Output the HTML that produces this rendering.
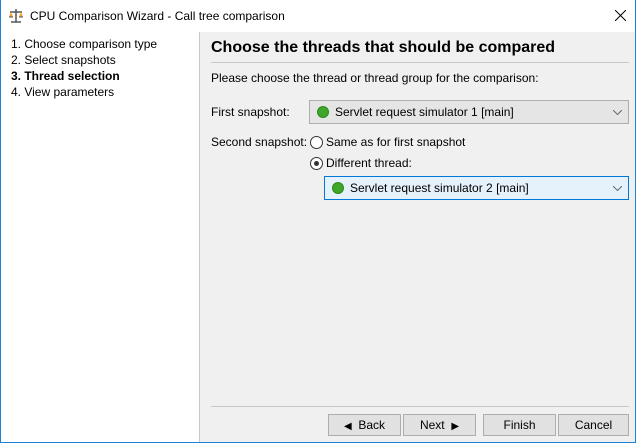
<!DOCTYPE html>
<html><head><style>
*{margin:0;padding:0;box-sizing:border-box}
body{width:636px;height:443px;overflow:hidden;font-family:"Liberation Sans",sans-serif;font-size:12px;color:#000;background:#f0f0f0;position:relative}
.win{position:absolute;left:0;top:0;width:636px;height:443px;border:1px solid #1883d7;border-top:none}
.title{position:absolute;left:0;top:0;width:636px;height:32px;background:#fff}
.title .t{position:absolute;left:30px;top:9px;font-size:12px}
.left{position:absolute;left:1px;top:32px;width:199px;height:410px;background:#fff;border-right:1px solid #c9c9c9}
.left div{position:absolute;left:10px;font-size:12px}
.abs{position:absolute}
.combo{position:absolute;height:24px;border:1px solid #adadad;background:#e5e5e5}
.combo .dot{position:absolute;left:7px;top:5px;width:12px;height:12px;border-radius:50%;background:#3fa62a;border:1px solid #2d8a1c}
.combo .lbl{position:absolute;left:25px;top:4px}
.combo svg{position:absolute;right:6px;top:9px}
.radio{position:absolute;width:13px;height:13px;border:1px solid #333;border-radius:50%;background:#fff}
.btn{position:absolute;top:414px;height:22px;border:1px solid #adadad;background:#e1e1e1;text-align:center;line-height:20px}
</style></head><body>
<div class="title">
<svg class="abs" style="left:8px;top:8px" width="16" height="16" viewBox="0 0 16 16"><path d="M8 1v13M3 14h10M2 4h12" stroke="#555" stroke-width="1.5" fill="none"/><path d="M1 9l2-5 2 5zM11 9l2-5 2 5z" fill="#f0a020"/><path d="M1 9h4M11 9h4" stroke="#555"/></svg>
<div class="t">CPU Comparison Wizard - Call tree comparison</div>
<svg class="abs" style="left:615px;top:10px" width="11" height="11"><path d="M0 0L11 11M11 0L0 11" stroke="#000" stroke-width="1"/></svg>
</div>
<div class="left">
<div style="top:5px">1. Choose comparison type</div>
<div style="top:21px">2. Select snapshots</div>
<div style="top:37px;font-weight:bold">3. Thread selection</div>
<div style="top:53px">4. View parameters</div>
</div>
<div class="abs" style="left:211px;top:39px;font-size:16px;font-weight:bold">Choose the threads that should be compared</div>
<div class="abs" style="left:211px;top:62px;width:418px;height:1px;background:#c8c8c8"></div>
<div class="abs" style="left:211px;top:71px">Please choose the thread or thread group for the comparison:</div>
<div class="abs" style="left:211px;top:105px">First snapshot:</div>
<div class="combo" style="left:309px;top:100px;width:320px"><div class="dot"></div><div class="lbl">Servlet request simulator 1 [main]</div><svg width="9" height="5"><path d="M0 0l4.5 4.5L9 0" stroke="#666" fill="none"/></svg></div>
<div class="abs" style="left:211px;top:135px">Second snapshot:</div>
<div class="radio" style="left:310px;top:136px"></div>
<div class="abs" style="left:326px;top:135px">Same as for first snapshot</div>
<div class="radio" style="left:310px;top:157px"><div style="position:absolute;left:3px;top:3px;width:5px;height:5px;border-radius:50%;background:#333"></div></div>
<div class="abs" style="left:326px;top:156px">Different thread:</div>
<div class="combo" style="left:324px;top:176px;width:305px;border-color:#0078d7;background:#e5f1fb"><div class="dot"></div><div class="lbl">Servlet request simulator 2 [main]</div><svg width="9" height="5"><path d="M0 0l4.5 4.5L9 0" stroke="#666" fill="none"/></svg></div>
<div class="abs" style="left:211px;top:406px;width:418px;height:1px;background:#c8c8c8"></div>
<div class="btn" style="left:328px;width:73px"><span style="font-size:10px">◀</span>&nbsp; Back</div>
<div class="btn" style="left:403px;width:73px">Next &nbsp;<span style="font-size:10px">▶</span></div>
<div class="btn" style="left:483px;width:73px">Finish</div>
<div class="btn" style="left:558px;width:71px">Cancel</div>
<div class="win"></div>
</body></html>
